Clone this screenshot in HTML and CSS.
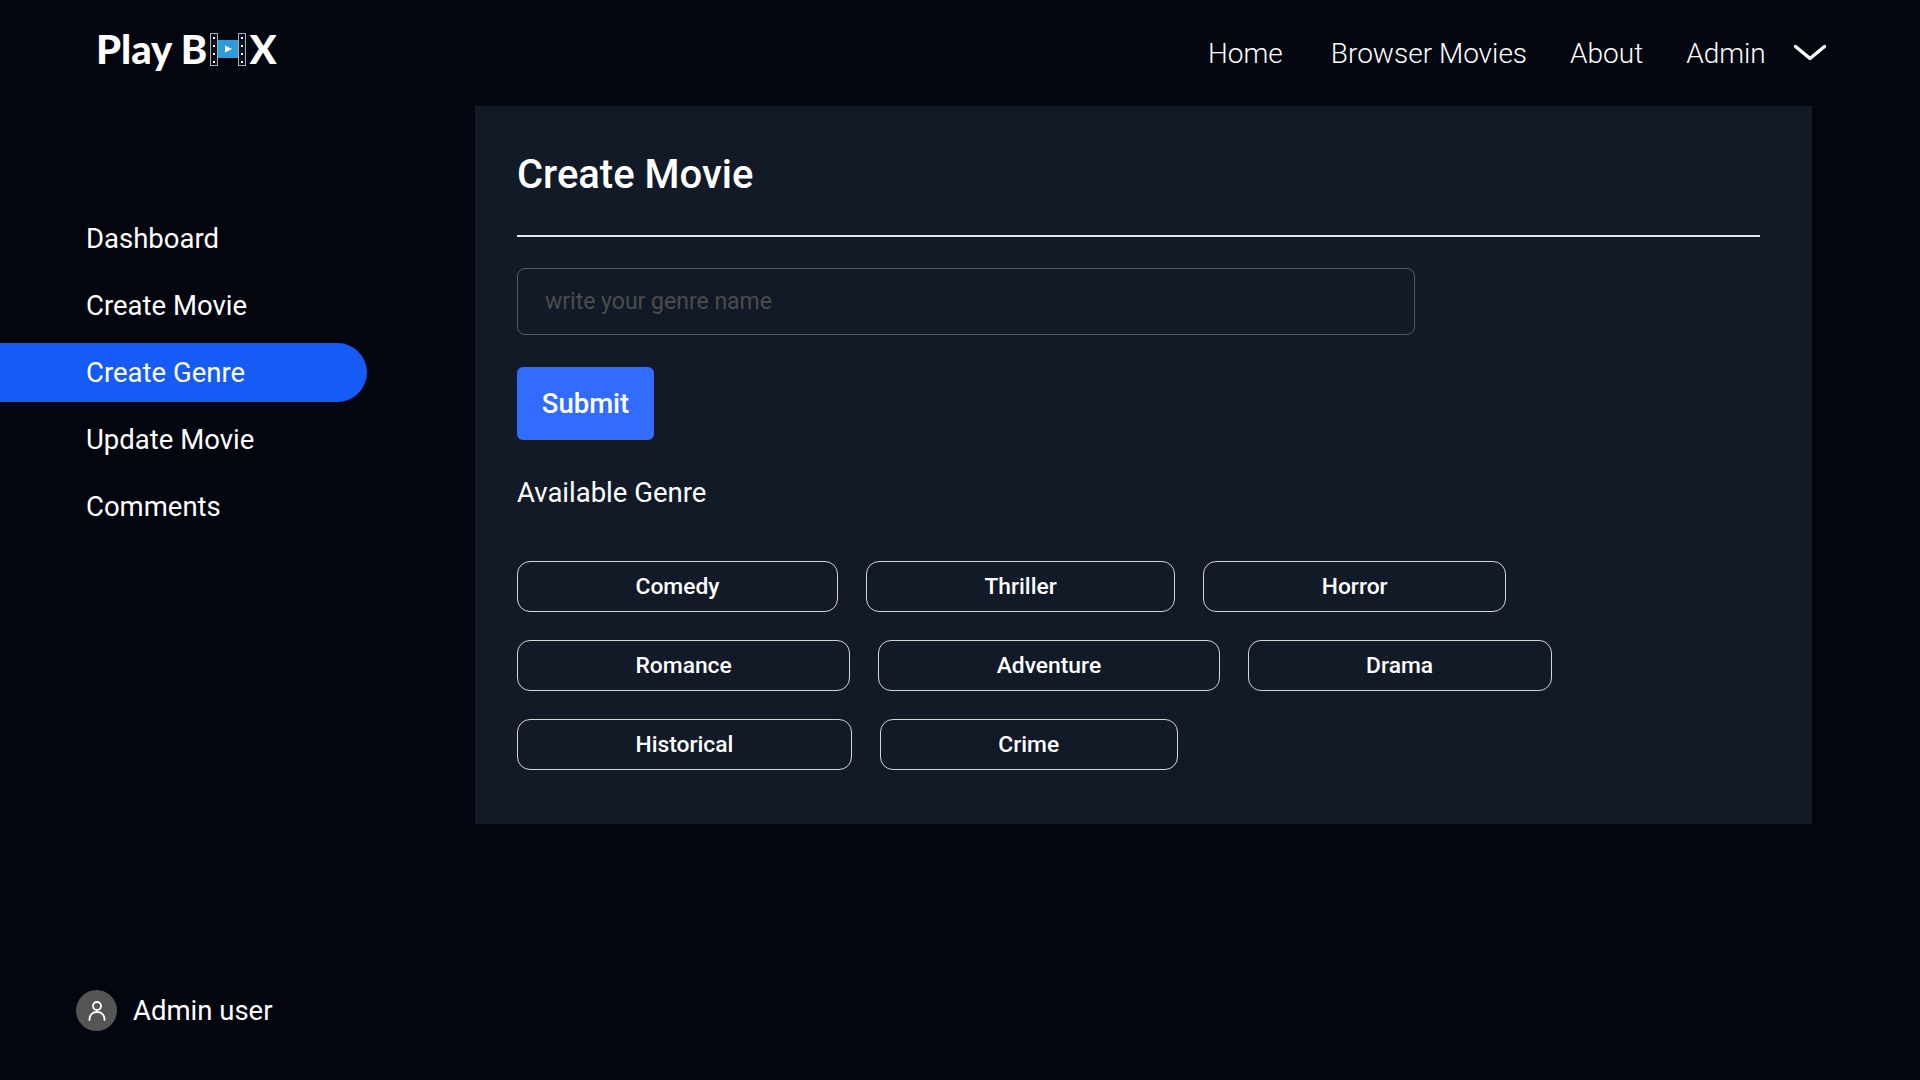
FILE: index.html
```html
<!DOCTYPE html>
<html>
<head>
    <meta name="viewport" content="width=device-width, initial-scale=1">
    <title>Play Box - Create Genre</title>
    <link rel="stylesheet" href="styles.css">
</head>
<body>

<div class="sidebar">
  <div class="logo">
    <span>Play B</span>
    <svg class="logo-icon" width="36" height="33" viewBox="0 0 36 33">
      <rect x="8" y="7" width="20" height="18" fill="#2f9bd8"/>
      <path d="M15 12.500l7 3.500-7 3.500z" fill="#fff"/>
      <rect x="0.500" y="0.500" width="7" height="32" fill="#0b0e18" stroke="#a9adb5"/>
      <rect x="28.500" y="0.500" width="7" height="32" fill="#0b0e18" stroke="#a9adb5"/>
      <path d="M3 4h2v2h-2zM3 12h2v2h-2zM3 20h2v2h-2zM3 28h2v2h-2zM31 4h2v2h-2zM31 12h2v2h-2zM31 20h2v2h-2zM31 28h2v2h-2z" fill="#fff"/>
    </svg>
    <span>X</span>
  </div>
  <div class="side-menu">
    <a href="#">Dashboard</a>
    <a href="#">Create Movie</a>
    <a href="#" class="active">Create Genre</a>
    <a href="#">Update Movie</a>
    <a href="#">Comments</a>
  </div>
  <div class="side-user">
    <span class="avatar">
      <svg width="20" height="22" viewBox="0 0 20 22" fill="none" stroke="#fff" stroke-width="1.800">
        <circle cx="10" cy="6" r="4"/>
        <path d="M2.500 20c0-5 3-8 7.500-8s7.500 3 7.500 8" stroke-linecap="round"/>
      </svg>
    </span>
    <span>Admin user</span>
  </div>
</div>

<div class="main">
  <div class="topnav">
    <a href="#" class="home">Home</a>
    <a href="#">Browser Movies</a>
    <a href="#">About</a>
    <a href="#">Admin</a>
    <svg class="chevron" width="34" height="20" viewBox="0 0 34 20" fill="none" stroke="#fff" stroke-width="3.500" stroke-linecap="round" stroke-linejoin="round">
      <path d="M2.500 3.500L17 15.500 31.500 3.500"/>
    </svg>
  </div>

  <div class="panel">
    <h1>Create Movie</h1>
    <hr>
    <input class="genre-input" type="text" placeholder="write your genre name">
    <button class="submit">Submit</button>
    <h2>Available Genre</h2>
    <div class="genres">
      <div class="genre-row">
        <span class="chip">Comedy</span>
        <span class="chip">Thriller</span>
        <span class="chip">Horror</span>
      </div>
      <div class="genre-row">
        <span class="chip">Romance</span>
        <span class="chip">Adventure</span>
        <span class="chip">Drama</span>
      </div>
      <div class="genre-row">
        <span class="chip">Historical</span>
        <span class="chip">Crime</span>
      </div>
    </div>
  </div>
</div>

</body>
</html>
```

FILE: styles.css
```css
* {
    box-sizing: border-box;
}

body {
    margin: 0;
    height: 1080px;
    overflow: hidden;
    display: flex;
    background-color: #03050f;
    color: #ffffff;
    font-family: Roboto, sans-serif;
}

a {
    color: #ffffff;
    text-decoration: none;
}

.sidebar {
    width: 475px;
    height: 100%;
    display: flex;
    flex-direction: column;
}

.logo {
    display: flex;
    align-items: center;
    height: 50px;
    margin-top: 24px;
    padding-left: 96px;
    font-family: Lato, sans-serif;
    font-weight: 900;
    font-size: 40px;
}

.logo span {
    white-space: pre;
}

.logo-icon {
    margin: 0 3px 0 3px;
}

.side-menu {
    display: flex;
    flex-direction: column;
    margin-top: 135px;
}

.side-menu a {
    width: 367px;
    height: 59px;
    margin-bottom: 8px;
    padding-left: 86px;
    display: flex;
    align-items: center;
    font-size: 27.500px;
}

.side-menu .active {
    background-color: #145cf5;
    border-radius: 0 30px 30px 0;
}

.side-user {
    margin-top: auto;
    margin-bottom: 49px;
    padding-left: 76px;
    display: flex;
    align-items: center;
    gap: 16px;
    font-size: 27.500px;
}

.avatar {
    width: 41px;
    height: 41px;
    border-radius: 50%;
    background-color: #555555;
    display: flex;
    align-items: center;
    justify-content: center;
}

.main {
    flex: 1;
}

.topnav {
    height: 106px;
    display: flex;
    align-items: center;
    padding-left: 733px;
    font-size: 28px;
    font-weight: 300;
}

.topnav a {
    margin-right: 43px;
}

.topnav .home {
    margin-right: 48px;
}

.chevron {
    margin-left: -16px;
}

.panel {
    width: 1337px;
    height: 718px;
    padding: 45px 52px 0 42px;
    background-color: #121a28;
}

.panel h1 {
    margin: 0;
    font-size: 40px;
    line-height: 47px;
    font-weight: 500;
}

.panel hr {
    margin: 37px 0 31px 0;
    border: 0;
    height: 2px;
    background-color: #e6e6e6;
}

.genre-input {
    display: block;
    width: 898px;
    height: 67px;
    padding: 0 27px;
    background: transparent;
    border: 1px solid #5a5a5a;
    border-radius: 8px;
    color: #ffffff;
    font-family: Roboto, sans-serif;
    font-size: 23px;
}

.genre-input::placeholder {
    color: #4c4c4c;
}

.submit {
    display: block;
    width: 137px;
    height: 73px;
    margin-top: 32px;
    border: 0;
    border-radius: 6px;
    background-color: #316bff;
    color: #ffffff;
    font-family: Roboto, sans-serif;
    font-size: 27.500px;
    font-weight: 500;
}

.panel h2 {
    margin: 36px 0 0 0;
    font-size: 27.500px;
    line-height: 34px;
    font-weight: 400;
}

.genres {
    margin-top: 51px;
    display: flex;
    flex-direction: column;
    gap: 28px;
}

.genre-row {
    display: flex;
    gap: 28px;
}

.chip {
    height: 51px;
    padding: 0 117.500px;
    display: flex;
    align-items: center;
    border: 1px solid #d5d5d5;
    border-radius: 13px;
    font-size: 22.800px;
    font-weight: 500;
}
```
